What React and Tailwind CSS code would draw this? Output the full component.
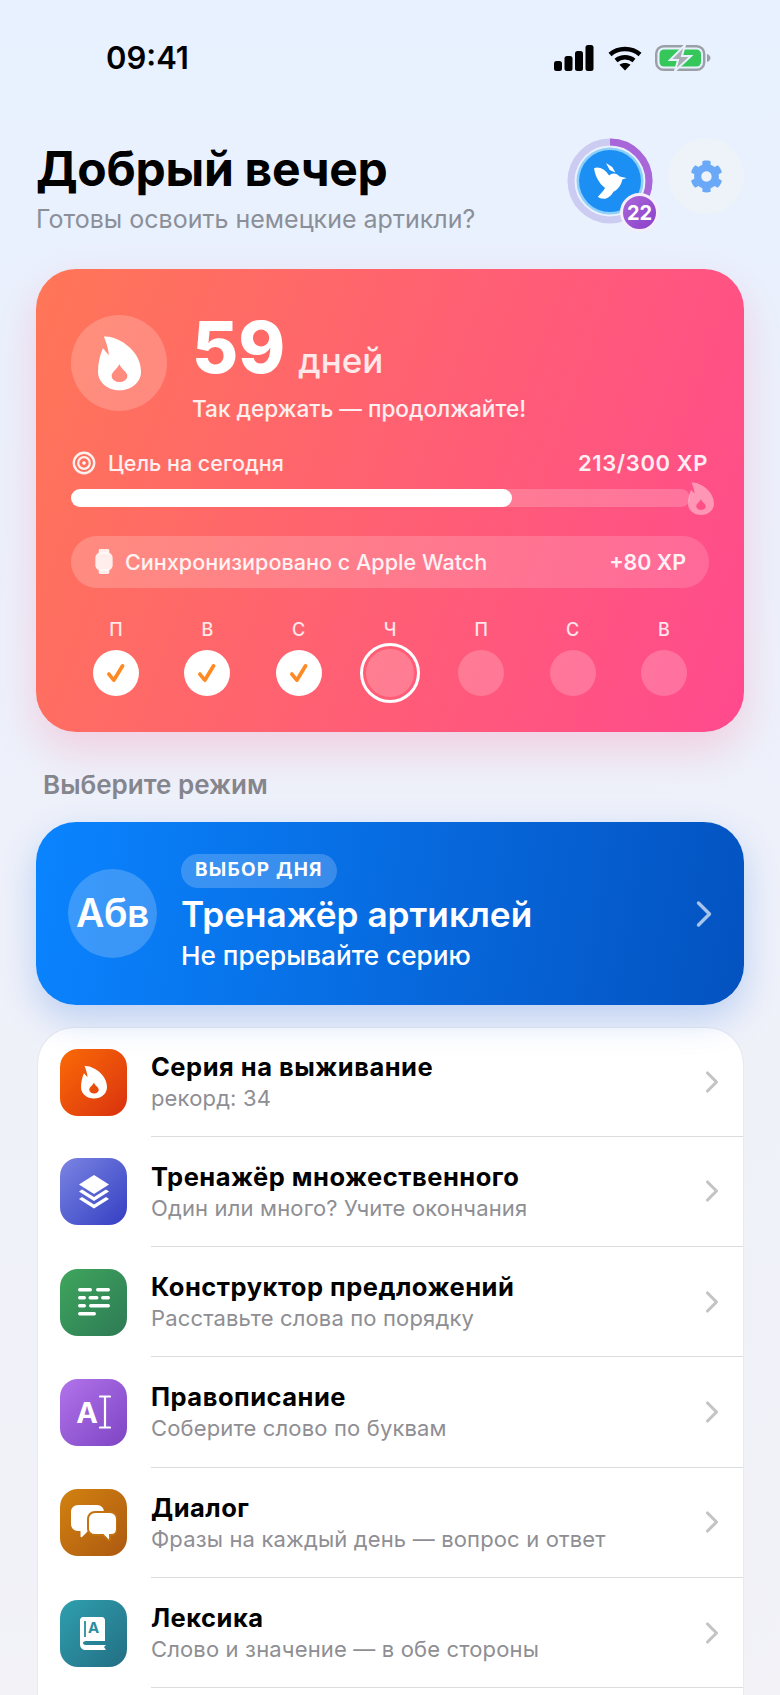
import { FaCog } from "react-icons/fa";
import { ChevronRight } from "lucide-react";

const Flame = ({ className }) => (
  <svg viewBox="0 0 44 56" className={className} fill="currentColor">
    <path
      fillRule="evenodd"
      d="M6 1C14 0 28 6 36 16C41 22 44 29 44 37C44 48 34 56 22 56C10 56 0 48 0 37C0 28 2 20 5 13C7 15 9 18 11 20C11 14 8 6 6 1ZM22 29C23 34 30 37 30 41C30 45 26 47.5 22 47.5C18 47.5 14 45 14 41C14 37 20 34 22 29Z"
    />
  </svg>
);

const StatusIcons = () => (
  <div className="flex items-center">
    <svg viewBox="0 0 40 26" className="w-[40px] h-[26px]" fill="#000">
      <rect x="0" y="16" width="8" height="10" rx="2.5" />
      <rect x="10.5" y="11" width="8" height="15" rx="2.5" />
      <rect x="21" y="6" width="8" height="20" rx="2.5" />
      <rect x="31.5" y="0" width="8" height="26" rx="2.5" />
    </svg>
    <svg viewBox="0 0 34 25" className="w-[34px] h-[25px] ml-[14px]" fill="none" stroke="#000" strokeWidth="4.4">
      <path d="M2 8.5C10 1.2 24 1.2 32 8.5" />
      <path d="M8 14.5C13 10.2 21 10.2 26 14.5" />
      <path d="M17 24.5L11.5 18.8C14.5 16.4 19.5 16.4 22.5 18.8Z" fill="#000" stroke="none" />
    </svg>
    <svg viewBox="0 0 56 26" className="w-[56px] h-[26px] ml-[13px]" fill="none">
      <rect x="1.2" y="1.2" width="48" height="23.6" rx="7.5" stroke="#9aa0a6" strokeWidth="2.4" />
      <rect x="4.5" y="4.5" width="41.5" height="17" rx="4.5" fill="#35c759" />
      <path d="M52 9C54.5 10 55.5 11.5 55.5 13C55.5 14.5 54.5 16 52 17Z" fill="#9aa0a6" />
      <path d="M30 0L15 15H23L20 26L36 11H27Z" fill="#a9aeb3" stroke="#e9f1ff" strokeWidth="2" />
    </svg>
  </div>
);

const Bird = () => (
  <svg viewBox="0 0 105 115" className="w-[33px] h-[36px]" fill="#fff">
    <path d="M38 0L58 13L68 30L50 22Z" />
    <path d="M0 17C15 10 35 20 48 40C55 32 72 30 80 42C87 44 96 46 104 48L90 53C88 68 78 84 62 92C56 104 46 112 36 114C28 115 15 113 12 108C20 100 30 90 35 80C15 65 3 40 0 17Z" />
  </svg>
);

const Avatar = () => (
  <div className="relative w-[86px] h-[86px]">
    <svg viewBox="0 0 86 86" className="w-full h-full" fill="none">
      <circle cx="43" cy="43" r="39" stroke="#cccbf1" strokeWidth="7" />
      <circle cx="43" cy="43" r="39" stroke="#a866d9" strokeWidth="7" strokeDasharray="76 245" transform="rotate(-90 43 43)" />
      <circle cx="43" cy="43" r="33.5" fill="#8fd0fb" />
      <circle cx="43" cy="43" r="31" fill="#1c8ff5" />
    </svg>
    <div className="absolute inset-0 flex items-center justify-center">
      <Bird />
    </div>
    <div className="absolute left-[53px] top-[55px] w-[39px] h-[39px] rounded-full border-[3px] border-[#f4effb] bg-linear-to-br from-[#ab66da] to-[#8a40c8] flex items-center justify-center text-white text-[20px] font-bold">
      22
    </div>
  </div>
);

const days = [
  { label: "П", state: "done" },
  { label: "В", state: "done" },
  { label: "С", state: "done" },
  { label: "Ч", state: "today" },
  { label: "П", state: "todo" },
  { label: "С", state: "todo" },
  { label: "В", state: "todo" },
];

const Day = ({ label, state }) => (
  <div className="flex flex-col items-center w-[60px]">
    <span className="text-[18px] leading-[20px] font-medium text-white/85">{label}</span>
    <div className="mt-[3px] w-[60px] h-[60px] flex items-center justify-center">
      {state === "done" && (
        <div className="w-[46px] h-[46px] rounded-full bg-white flex items-center justify-center">
          <svg viewBox="0 0 20 20" className="w-[22px] h-[22px]" fill="none" stroke="#ff8a23" strokeWidth="3.4" strokeLinecap="round" strokeLinejoin="round">
            <path d="M3.5 11L8 16.5L16 3.5" />
          </svg>
        </div>
      )}
      {state === "today" && (
        <div className="w-[60px] h-[60px] rounded-full border-[3px] border-white flex items-center justify-center">
          <div className="w-[48px] h-[48px] rounded-full bg-white/20" />
        </div>
      )}
      {state === "todo" && <div className="w-[46px] h-[46px] rounded-full bg-white/20" />}
    </div>
  </div>
);

const StreakCard = () => (
  <div className="mt-[35px] h-[463px] rounded-[40px] bg-linear-[110deg] from-[#ff7657] to-[#ff4a8e] shadow-[0_18px_44px_rgba(255,80,130,0.22)] px-[35px] pt-[46px] text-white">
    <div className="flex">
      <div className="w-[96px] h-[96px] rounded-full bg-white/20 flex items-center justify-center">
        <Flame className="w-[43px] h-[56px] text-white" />
      </div>
      <div className="ml-[25px]">
        <div className="flex items-baseline h-[64px]">
          <span className="text-[71px] leading-[64px] font-extrabold">59</span>
          <span className="text-[35px] leading-[40px] font-medium text-white/85 ml-[13px]">дней</span>
        </div>
        <p className="mt-[17px] text-[22.6px] leading-[26px] font-medium text-white/90">Так держать — продолжайте!</p>
      </div>
    </div>
    <div className="mt-[28px] flex items-center justify-between h-[26px] pr-[1px]">
      <div className="flex items-center">
        <svg viewBox="0 0 24 24" className="w-[24px] h-[24px] ml-[1px]" fill="none" stroke="#fff" strokeOpacity="0.9">
          <circle cx="12" cy="12" r="10.2" strokeWidth="2.4" />
          <circle cx="12" cy="12" r="5.8" strokeWidth="2.2" />
          <circle cx="12" cy="12" r="1.8" fill="#fff" stroke="none" />
        </svg>
        <span className="ml-[12px] text-[21.5px] font-medium text-white/90">Цель на сегодня</span>
      </div>
      <span className="text-[22px] font-semibold text-white/90 tracking-[0.6px]">213/300 XP</span>
    </div>
    <div className="relative mt-[13px] mr-[19px] h-[18px] rounded-full bg-white/20">
      <div className="h-full w-[441px] rounded-full bg-white" />
      <Flame className="absolute right-[-24px] top-[-7px] w-[26px] h-[33px] text-white/40" />
    </div>
    <div className="mt-[29px] h-[52px] rounded-full bg-linear-to-r from-white/20 to-white/15 flex items-center justify-between pl-[24px] pr-[23px]">
      <div className="flex items-center">
        <svg viewBox="0 0 18 26" className="w-[18px] h-[25px]" fill="#fff" fillOpacity="0.85">
          <rect x="3.5" y="0" width="11" height="5" rx="1.5" />
          <rect x="3.5" y="21" width="11" height="5" rx="1.5" />
          <rect x="0" y="3.5" width="18" height="19" rx="5.5" />
        </svg>
        <span className="ml-[12px] text-[21.6px] font-medium text-white/90">Синхронизировано с Apple Watch</span>
      </div>
      <span className="text-[21.4px] font-semibold text-white/90">+80 XP</span>
    </div>
    <div className="mt-[32px] flex justify-between px-[15px]">
      {days.map((d, i) => (
        <Day key={i} {...d} />
      ))}
    </div>
  </div>
);

const FeaturedCard = () => (
  <div className="relative mt-[22px] h-[183px] rounded-[40px] bg-linear-[100deg] from-[#0a84ff] to-[#0452c0] shadow-[0_14px_36px_rgba(10,90,220,0.22)] flex items-center pl-[32px] pr-[18px] text-white">
    <div className="w-[89px] h-[89px] rounded-full bg-white/20 flex items-center justify-center text-[39px] font-semibold tracking-[-0.5px]">
      Абв
    </div>
    <div className="ml-[24px] flex-1 pb-[3px]">
      <div className="inline-flex h-[34px] items-center rounded-full bg-white/20 px-[14px] text-[19px] font-bold tracking-[1.2px]">
        ВЫБОР ДНЯ
      </div>
      <p className="mt-[5px] text-[35.2px] leading-[42px] font-semibold">Тренажёр артиклей</p>
      <p className="mt-[6px] text-[26.2px] leading-[30px] font-medium">Не прерывайте серию</p>
    </div>
    <ChevronRight className="w-[44px] h-[44px] text-white/65" strokeWidth={1.85} />
  </div>
);

const LayersIcon = () => (
  <svg viewBox="0 0 32 36" className="w-[32px] h-[36px]" fill="#fff">
    <path d="M16 1L31 10.5L16 20L1 10.5Z" />
    <path d="M1 17.5L4 15.5L16 23L28 15.5L31 17.5L16 27Z" />
    <path d="M1 25L4 23L16 30.5L28 23L31 25L16 34.5Z" />
  </svg>
);

const SentenceIcon = () => (
  <svg viewBox="0 0 32 28" className="w-[32px] h-[28px]" fill="#fff">
    <rect x="0" y="0" width="14" height="3.4" rx="1.7" />
    <rect x="18" y="0" width="14" height="3.4" rx="1.7" />
    <rect x="0" y="8" width="8" height="3.4" rx="1.7" />
    <rect x="10.5" y="8" width="10" height="3.4" rx="1.7" />
    <rect x="23" y="8" width="9" height="3.4" rx="1.7" />
    <rect x="0" y="16" width="8" height="3.4" rx="1.7" />
    <rect x="11" y="16" width="21" height="3.4" rx="1.7" />
    <rect x="0" y="24" width="18" height="3.4" rx="1.7" />
  </svg>
);

const SpellIcon = () => (
  <div className="flex items-center text-white">
    <span className="text-[29px] leading-none font-bold">A</span>
    <svg viewBox="0 0 12 34" className="w-[12px] h-[34px] ml-[1px]" fill="none" stroke="#fff" strokeWidth="2.2" strokeLinecap="round">
      <path d="M1 1.5H11M6 1.5V32.5M1 32.5H11" />
    </svg>
  </div>
);

const ChatIcon = () => (
  <svg viewBox="0 0 46 36" className="w-[46px] h-[36px]" fill="#fff">
    <path d="M7 0H26C30 0 33 3 33 7V19C33 23 30 26 26 26H17L11 32C10.5 32.5 9.5 32 9.5 31.5V26H7C3 26 0 23 0 19V7C0 3 3 0 7 0Z" />
    <path
      d="M24 7H39C43 7 46 10 46 14V24C46 27.5 43.5 30 40 30H39V35C39 35.8 38 36 37.5 35.5L32 30H24C20 30 17 27 17 24V14C17 10 20 7 24 7Z"
      stroke="#c4720f"
      strokeWidth="2"
    />
  </svg>
);

const BookIcon = () => (
  <div className="relative w-[27px] h-[33px]">
    <svg viewBox="0 0 27 33" className="absolute inset-0 w-full h-full" fill="none">
      <path d="M3 0H22C23.5 0 25 1.5 25 3V24H6C4 24 3 25 3 26C3 27 4 28 6 28H26L24 30L26 33H6C2.5 33 0 31 0 27V3C0 1.5 1.5 0 3 0Z" fill="#fff" />
      <path d="M5 4V20" stroke="#2a8d9f" strokeWidth="1.8" />
    </svg>
    <span className="absolute left-[8px] top-[2px] text-[15px] leading-[18px] font-bold text-[#2a8d9f]">A</span>
  </div>
);

const modes = [
  {
    title: "Серия на выживание",
    sub: "рекорд: 34",
    bg: "bg-linear-to-br from-[#fb6a05] to-[#d92f0e]",
    icon: <Flame className="w-[26px] h-[34px] text-white" />,
  },
  {
    title: "Тренажёр множественного",
    sub: "Один или много? Учите окончания",
    bg: "bg-linear-to-br from-[#7d84e2] to-[#363cc2]",
    icon: <LayersIcon />,
  },
  {
    title: "Конструктор предложений",
    sub: "Расставьте слова по порядку",
    bg: "bg-linear-to-br from-[#3fa65c] to-[#2e7a55]",
    icon: <SentenceIcon />,
  },
  {
    title: "Правописание",
    sub: "Соберите слово по буквам",
    bg: "bg-linear-to-br from-[#b273ea] to-[#7e44c4]",
    icon: <SpellIcon />,
  },
  {
    title: "Диалог",
    sub: "Фразы на каждый день — вопрос и ответ",
    bg: "bg-linear-to-br from-[#d2820f] to-[#ad5911]",
    icon: <ChatIcon />,
  },
  {
    title: "Лексика",
    sub: "Слово и значение — в обе стороны",
    bg: "bg-linear-to-br from-[#2fa0ae] to-[#236e84]",
    icon: <BookIcon />,
  },
];

const ModeRow = ({ title, sub, bg, icon }) => (
  <div className="h-[110.4px] first:h-[108.5px] flex items-center pl-[22px]">
    <div className={`w-[67px] h-[67px] rounded-[18px] flex items-center justify-center shrink-0 ${bg}`}>{icon}</div>
    <div className="ml-[24px] flex-1 h-full flex items-center border-b border-[#dcdce0] pr-[13px]">
      <div className="flex-1">
        <p className="text-[25.5px] leading-[32px] font-bold text-black tracking-[0.5px]">{title}</p>
        <p className="text-[22px] leading-[28px] mt-[1px] text-[#8e8e93] tracking-[0.15px]">{sub}</p>
      </div>
      <ChevronRight className="w-[36px] h-[36px] text-[#c4c4c6]" strokeWidth={2.1} />
    </div>
  </div>
);

export default function App() {
  return (
    <div className="h-[1695px] overflow-hidden bg-linear-to-b from-[#e8f1ff] via-[#eef1fa] to-[#f2f2f7] font-['Inter',sans-serif] px-[36px]">
      <div className="pt-[34px] h-[82px] flex items-center justify-between pl-[70px] pr-[33px]">
        <span className="text-[31px] font-semibold text-black">09:41</span>
        <StatusIcons />
      </div>
      <div className="mt-[56px] flex justify-between">
        <div>
          <h1 className="text-[48px] leading-[56px] font-bold text-black tracking-[-0.3px] mt-[3px]">Добрый вечер</h1>
          <p className="mt-[7px] text-[25px] leading-[30px] text-[#8b8f98]">Готовы освоить немецкие артикли?</p>
        </div>
        <div className="flex">
          <Avatar />
          <div className="ml-[15px] w-[76px] h-[76px] rounded-full bg-[#edf3f8] flex items-center justify-center">
            <FaCog className="w-[33px] h-[33px] text-[#6aa8f8]" />
          </div>
        </div>
      </div>
      <StreakCard />
      <p className="mt-[38px] ml-[7px] text-[26px] leading-[30px] font-semibold text-[#85858d]">Выберите режим</p>
      <FeaturedCard />
      <div className="mt-[23px] ml-[2px] mr-[1px] rounded-t-[36px] bg-white pb-[40px] shadow-[0_0_2px_rgba(0,0,0,0.12)]">
        {modes.map(m => (
          <ModeRow key={m.title} {...m} />
        ))}
      </div>
    </div>
  );
}
